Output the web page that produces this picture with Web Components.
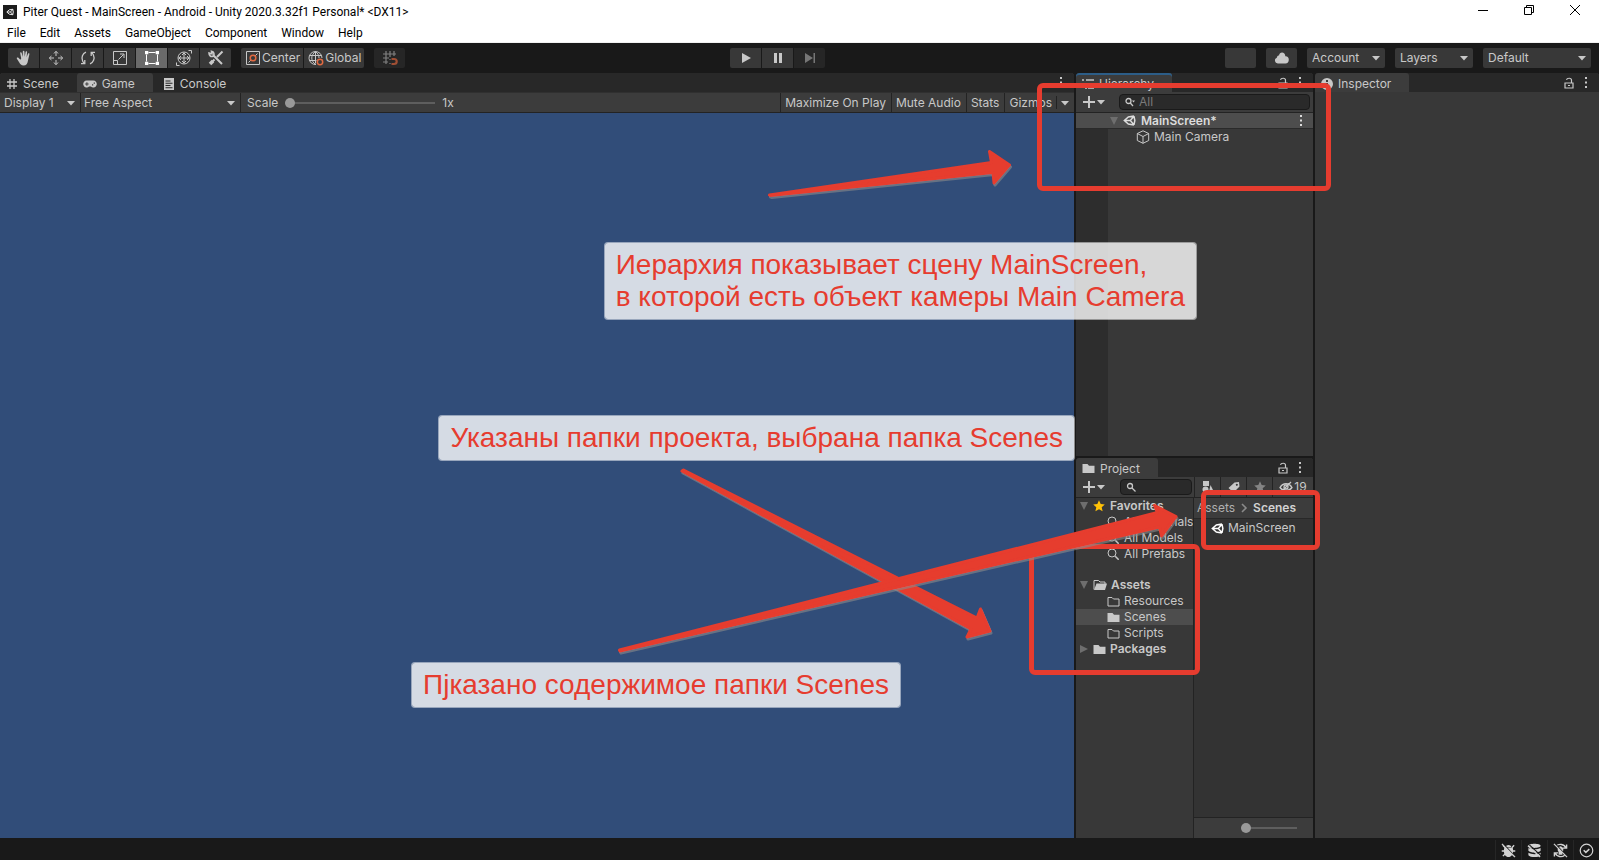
<!DOCTYPE html>
<html lang="en">
<head>
<meta charset="utf-8">
<title>Piter Quest - MainScreen - Android - Unity 2020.3.32f1 Personal* &lt;DX11&gt;</title>
<style>
  html, body { margin: 0; height: 100%; }
  body { overflow: hidden; background: #191919; font: 12px/16px Inter, "Liberation Sans", sans-serif; color: #c8c8c8; }
</style>
</head>
<body>
<unity-editor></unity-editor>
<script>
const BASE = `
  :host, *, *::before, *::after { box-sizing: border-box; }
  button, input, select { font: inherit; color: inherit; margin: 0; padding: 0; border: 0; background: none; outline: 0; }
  button { display: flex; align-items: center; white-space: nowrap; }
`;

function define(tag, html, setup) {
  const template = document.createElement('template');
  template.innerHTML = html;
  customElements.define(tag, class extends HTMLElement {
    constructor() {
      super();
      this.attachShadow({ mode: 'open' }).append(template.content.cloneNode(true));
    }
    connectedCallback() { if (setup) setup.call(this, this.shadowRoot); }
  });
}

const ICONS = {
  unity: [16, '<path fill="none" stroke="currentColor" stroke-width="1.800" d="M13.500 2.500 6.600 3.600 1.600 8l5 4.400 6.900 1.100M13.500 2.500l1.100 5.500-1.100 5.500M9 8H2.500M9 8l4.500-5.200M9 8l4.500 5.200"/>'],
  hand: [16, '<path fill="currentColor" d="M5.200 8.600 4.200 3.200c-.2-1 1.200-1.300 1.500-.3l1.100 4V1.500c0-1.100 1.500-1.100 1.600 0L8.700 6.700 9.600 2c.2-1 1.600-.8 1.500.3l-.5 5 1.400-3.500c.4-.9 1.700-.5 1.400.5L12 10.500c-.4 3-1.600 5-4.500 5-2.200 0-3.300-1.200-4.200-2.900L.9 8.700c-.5-1 .7-1.700 1.500-.9l2 2z"/>'],
  move: [16, '<path fill="none" stroke="currentColor" d="M8 2v4M8 10v4M2 8h4M10 8h4M6 3.500 8 1.200l2 2.300M6 12.500l2 2.300 2-2.300M3.500 6 1.200 8l2.300 2M12.500 6l2.300 2-2.300 2"/>'],
  rotate: [16, '<path fill="none" stroke="currentColor" stroke-width="1.300" d="M6 2.200C2.600 3.400 1 7.500 2.600 11c.4.900 1 1.700 1.700 2.400M10 13.800c3.400-1.200 5-5.300 3.400-8.800-.4-.9-1-1.700-1.700-2.400M1 13.700h3.800V10M15 2.300h-3.800V6"/>'],
  scale: [16, '<path fill="none" stroke="currentColor" d="M1.500 1.500h13v13h-13zM1.500 10.500h4v4M6.500 9.500l5-5M8 4h4v4"/>'],
  rect: [16, '<path fill="none" stroke="currentColor" d="M4.500 2.500h7M4.500 13.500h7M2.500 4.500v7M13.500 4.500v7"/><path fill="currentColor" d="M1 1h3.300v3.300H1zM11.700 1H15v3.300h-3.300zM1 11.700h3.300V15H1zM11.700 11.700H15V15h-3.300z"/>'],
  transform: [16, '<g fill="none" stroke="currentColor"><circle cx="8" cy="8" r="6"/><path d="M8 2.500v11M2.500 8h11M6 5l2-2 2 2M6 11l2 2 2-2M5 6 3 8l2 2M11 6l2 2-2 2M12.500.5h3v3M3.500 15.500h-3v-3"/></g>'],
  tools: [16, '<path fill="none" stroke="currentColor" stroke-width="2" d="m5 5 9 9M14.500 1.500 9 7M6.500 9.500 3 13"/><path fill="none" stroke="currentColor" stroke-width="1.600" d="M1 3c0 3 2 4 4.200 3.200C6.800 4.500 6 1.500 3.500 1.200L4 3.700z"/><path stroke="currentColor" stroke-width="3.500" d="m2 14 3-3"/>'],
  center: [16, '<path fill="none" stroke="currentColor" d="M1.500 1.500h13v13h-13zM3.500 12.500 6 10M10 6l2.500-2.500"/><circle cx="8" cy="8" r="2.800" fill="none" stroke="#e06a42" stroke-width="1.500"/>'],
  global: [16, '<g fill="none" stroke="currentColor"><path d="M14 8A6.500 6.500 0 1 0 8 14.500M7.500 1.500c-5 4-5 9 0 13M7.500 1.500c2.500 2 3.500 4 3.500 6.500M1.500 5.500h12M1.500 10.500h7M7.500 1.500v12"/></g><circle cx="12" cy="12" r="2.700" fill="none" stroke="#e06a42" stroke-width="1.500"/>'],
  snap: [16, '<path fill="none" stroke="#808080" stroke-width="1.200" d="M4 1v13M8 1v6M12 1v5M1 4h13M1 8h6M1 12h5M8 9v1M8 13v1"/><path fill="none" stroke="#a04f34" stroke-width="2.200" d="M9.500 9H12c3.600 0 3.600 5 0 5H9.500"/>'],
  play: [16, '<path fill="currentColor" d="m4 3 9 5-9 5z"/>'],
  pause: [16, '<path fill="currentColor" d="M4 3h3v10H4zM9 3h3v10H9z"/>'],
  step: [16, '<path fill="#767676" d="m3 3 8 5-8 5zM11.500 3H13v10h-1.500z"/>'],
  cloud: [16, '<path fill="currentColor" d="M4 13.500a3 3 0 0 1-1.200-5.800C3 6 4 5.500 5 5.500c.4-4.500 6.500-4 6.300.8 2.200-.2 3.500 1.300 3.500 3.500 0 2.300-1.300 3.700-3.300 3.700z"/>'],
  caret: [8, '<path fill="currentColor" d="M0 2h8L4 6.500z"/>'],
  fold: [10, '<path fill="#6e6e6e" d="M1 1h8L5 9z"/>'],
  unfold: [10, '<path fill="#6e6e6e" d="M1 1v8l8-4z"/>'],
  grid: [12, '<path fill="none" stroke="currentColor" stroke-width="1.300" d="M4 1v10M8 1v10M1 4h10M1 8h10"/>'],
  pad: [14, '<path fill="currentColor" fill-rule="evenodd" d="M3.800 3.500h6.400a3.500 3.500 0 1 1-2.300 6.100H6.100A3.500 3.500 0 1 1 3.800 3.500zM3.400 5.300v1.200H2.200v1h1.200v1.200h1V7.500h1.200v-1H4.400V5.300zM9 7.300v1.200h1.200V7.300zM10.700 5.600v1.200h1.200V5.600z"/>'],
  console: [12, '<path fill="currentColor" fill-rule="evenodd" d="M1 0h10v12H1zM2.500 2.500v1h5v-1zM2.500 4.700v1h7v-1zM2.500 7v1h5V7zM2.500 9.200v1h7v-1z"/>'],
  list: [12, '<path fill="none" stroke="currentColor" stroke-width="1.300" d="M0 2h2M4 2h8M3 6h2M6 6h6M3 10h2M6 10h6"/>'],
  info: [12, '<path fill="currentColor" fill-rule="evenodd" d="M6 0a6 6 0 1 1 0 12A6 6 0 0 1 6 0zM5 2v2h2V2zM4.500 5v1H5v3h-.5v1h3V9H7V5z"/>'],
  lock: [12, '<path fill="none" stroke="currentColor" stroke-width="1.200" d="M2 6h8v5H2zM3.500 2.800C4 .8 8.500.5 8.500 3.200V6M5 8.500h2"/>'],
  dots: [12, '<path fill="currentColor" d="M5 0h2v2H5zM5 4.500h2v2H5zM5 9h2v2H5z"/>'],
  plus: [12, '<path fill="currentColor" d="M5 0h2v5h5v2H7v5H5V7H0V5h5z"/>'],
  find: [10, '<g fill="none" stroke="currentColor" stroke-width="1.300"><circle cx="4" cy="4" r="2.500"/><path d="m6 6 3.500 3.500"/></g>'],
  findmore: [10, '<g fill="none" stroke="currentColor" stroke-width="1.300"><circle cx="3.500" cy="4" r="2.500"/><path d="M5.300 6 8 9"/></g><path fill="currentColor" d="M7 3.500h3L8.500 5.500z"/>'],
  search: [12, '<g fill="none" stroke="currentColor"><circle cx="5" cy="5" r="4"/><path stroke-width="1.500" d="m8.200 8.200 3.500 3.500"/></g>'],
  cube: [14, '<path fill="none" stroke="currentColor" d="m7 .8 5.700 2.700v7L7 13.300 1.300 10.500v-7zM1.300 3.500 7 6.500l5.700-3M7 6.500v6.800"/>'],
  folder: [13, '<path fill="currentColor" d="M.5 2h5L7 3.700h5.500V11H.5z"/>'],
  folderline: [13, '<path fill="none" stroke="currentColor" d="M1 2.500h4L6.500 4H12v7H1z"/>'],
  folderopen: [14, '<path fill="none" stroke="currentColor" d="M1 11.500v-9h4.500L7 4h5v2"/><path fill="currentColor" d="M3.500 5.500H14l-2 6.500H1z"/>'],
  star: [12, '<path fill="currentColor" d="m6 .3 1.700 3.800 4.100.4-3.100 2.700.9 4.100L6 9.200l-3.600 2.100.9-4.100L.2 4.500l4.100-.4z"/>'],
  shapes: [12, '<path fill="currentColor" d="M1 0h6v5H1zM8.500 4l3.500 7H7zM3.500 5.500a3 3 0 1 1 0 6 3 3 0 0 1 0-6z"/>'],
  tag: [12, '<path fill="currentColor" fill-rule="evenodd" d="M6.500 1.500 11 1l.5 4.500-6 6L.5 7zM8.800 2.700a1 1 0 1 0 .1 0z"/>'],
  hidden: [14, '<g fill="none" stroke="currentColor" stroke-width="1.300"><path d="M1 7.500c3-5 9-5 12 0-3 4-9 4-12 0zM2 12 12 2"/><circle cx="7" cy="7" r="2"/></g>'],
  chevron: [10, '<path fill="none" stroke="#8a8a8a" stroke-width="1.600" d="m3 1 4 4-4 4"/>'],
  bug: [16, '<path fill="currentColor" d="M5 4.500C5.200 1.500 10.800 1.500 11 4.500zM3.500 5h9l.5 3c0 4-2 7-5 7s-5-3-5-7z"/><path fill="none" stroke="currentColor" stroke-width="1.500" d="M2 2.500 4.500 5M14 2.500 11.500 5M.8 8.500h3M12.200 8.500h3M2 14l2.500-2.500M14 14l-2.500-2.500"/><path stroke="#191919" stroke-width="1.300" d="m2.500 1 13 14"/><path stroke="currentColor" stroke-width="1.300" d="m1 1 14 14"/>'],
  cache: [16, '<path fill="currentColor" d="M1.500 3c0-3 13-3 13 0S1.500 6 1.500 3zM1.500 5.200c3 2 10 2 13 0v3c-2 2.500-11 2.500-13 0zM1.500 10.500c3 2 10 2 13 0V13c-2 2.700-11 2.700-13 0z"/><path stroke="#191919" stroke-width="1.300" d="m2.500 2 13 12"/><path stroke="currentColor" stroke-width="1.300" d="m1 3 13 12"/>'],
  refresh: [16, '<g fill="none" stroke="currentColor" stroke-width="1.500"><path d="M3.500 3C6.500.5 12 1 13.800 5.500M14.500 1.500v4h-4M12.500 13C9.500 15.500 4 15 2.200 10.500M1.500 14.500v-4h4"/></g><path fill="currentColor" d="M8 3.500a3.500 3.500 0 0 1 2 6V12.500H6V9.500A3.500 3.500 0 0 1 8 3.500z"/><path stroke="#191919" stroke-width="1.300" d="m2.500 1 13 14"/><path stroke="currentColor" stroke-width="1.300" d="m1 1 14 14"/>'],
  check: [16, '<g fill="none" stroke="currentColor" stroke-width="1.300"><circle cx="8" cy="8" r="6.700"/><path stroke-width="1.600" d="m5 7.700 2.300 2.300L11 6.500"/></g>'],
  minimize: [12, '<path stroke="#000" d="M1 6.500h10"/>'],
  restore: [12, '<path fill="none" stroke="#000" d="M1.500 3.500h7v7h-7zM3.500 3.500v-2h7v7h-2"/>'],
  close: [12, '<path fill="none" stroke="#000" d="m1 1 10 10M11 1 1 11"/>'],
};

/* <u-icon name size>: one glyph of the set above */
customElements.define('u-icon', class extends HTMLElement {
  connectedCallback() {
    const [box, body] = ICONS[this.getAttribute('name')];
    const size = this.getAttribute('size') || box;
    const root = this.shadowRoot || this.attachShadow({ mode: 'open' });
    root.innerHTML = `<style>:host{display:block;flex:none}svg{display:block}</style>
      <svg width="${size}" height="${size}" viewBox="0 0 ${box} ${box}" aria-hidden="true">${body}</svg>`;
  }
});

/* Drop-down: a native select with the editor's caret laid in its last column */
customElements.define('u-select', class extends HTMLElement {
  connectedCallback() {
    const value = this.getAttribute('value');
    const root = this.shadowRoot || this.attachShadow({ mode: 'open' });
    root.innerHTML = `<style>${BASE}
      :host { display: grid; grid-template-columns: 1fr 13px; align-items: center; height: 20px; }
      select { appearance: none; grid-area: 1 / 1 / 2 / 3; width: 100%; height: 100%; padding-left: var(--pad, 4px); }
      u-icon { grid-area: 1 / 2; pointer-events: none; }
    </style><select aria-label="${value}"><option>${value}</option></select><u-icon name="caret"></u-icon>`;
  }
});

customElements.define('u-slider', class extends HTMLElement {
  connectedCallback() {
    const root = this.shadowRoot || this.attachShadow({ mode: 'open' });
    root.innerHTML = `<style>${BASE}
      :host { display: flex; align-items: center; }
      input { appearance: none; width: 100%; height: 10px; background: linear-gradient(#5e5e5e, #5e5e5e) center / 100% 2px no-repeat; }
      input::-webkit-slider-thumb { appearance: none; width: 10px; height: 10px; border-radius: 50%; background: #999; }
    </style><input type="range" min="0" max="100" value="0" aria-label="${this.getAttribute('label')}">`;
  }
});

/* Search field: the magnifier is passed in through the slot */
define('u-search', `<style>${BASE}
  :host { display: block; min-width: 0; }
  label { display: flex; align-items: center; gap: 4px; height: 16px; padding: 0 5px; border: 1px solid #1a1a1a; border-radius: 4px; background: #2a2a2a; }
  input { flex: 1; min-width: 0; width: 0; }
  input::placeholder { color: #7a7a7a; opacity: 1; }
</style><label><slot></slot><input type="text" aria-label="Search"></label>`, function (root) {
  root.querySelector('input').placeholder = this.getAttribute('hint') || '';
});

/* Dock panel: tab strip, optional tools at its right end, then the panel body */
define('u-panel', `<style>${BASE}
  :host { display: flex; flex-direction: column; min-width: 0; min-height: 0; background: #383838; border-radius: 3px 3px 0 0; overflow: hidden; }
  .strip { display: flex; height: 19px; background: #282828; flex: none; }
  .end { margin-left: auto; display: flex; align-items: flex-start; gap: 5px; padding: 4px 7px 0 0; }
</style><div class="strip" role="tablist"><slot name="tab"></slot><div class="end"><slot name="end"></slot></div></div><slot></slot>`);

define('u-tab', `<style>${BASE}
  :host { display: block; }
  button { height: 19px; gap: 5px; padding: 2px 18px 0 6px; border-radius: 3px 3px 0 0; }
  :host([wide]) button { padding-left: 10px; }
  :host([active]) button { background: #3c3c3c; }
  :host([focused]) button { box-shadow: inset 0 2px #2c5d87; }
</style><button role="tab"><slot name="icon"></slot><span><slot></slot></span></button>`);

define('title-bar', `<style>${BASE}
  :host { display: block; background: #fff; color: #000; font-family: Roboto, sans-serif; border-bottom: 1px solid #f0f0f0; }
  .title { display: flex; align-items: center; height: 24px; padding-left: 3px; }
  .logo { display: grid; place-items: center; width: 14px; height: 14px; margin-right: 6px; background: #1c1c1c; color: #fff; }
  .window { display: flex; gap: 34px; margin-left: auto; padding: 0 18px 4px 0; }
  nav { display: flex; height: 18px; }
  nav button { padding: 0 7px; }
</style>
<div class="title"><div class="logo"><u-icon name="unity" size="8"></u-icon></div>Piter Quest - MainScreen - Android - Unity 2020.3.32f1 Personal* &lt;DX11&gt;
  <div class="window"><button aria-label="Minimize"><u-icon name="minimize"></u-icon></button><button aria-label="Restore"><u-icon name="restore"></u-icon></button><button aria-label="Close"><u-icon name="close"></u-icon></button></div></div>
<nav><button>File</button><button>Edit</button><button>Assets</button><button>GameObject</button><button>Component</button><button>Window</button><button>Help</button></nav>`);

define('main-toolbar', `<style>${BASE}
  :host { display: grid; grid-template-columns: 1fr auto 1fr; align-items: center; height: 30px; padding: 0 8px; background: #191919; }
  .group { display: flex; gap: 1px; }
  .left, .right { display: flex; align-items: center; gap: 10px; }
  .right { justify-content: flex-end; }
  .play { margin-right: 44px; }
  button { height: 20px; min-width: 31px; justify-content: center; background: #383838; }
  .group button:first-child { border-radius: 2px 0 0 2px; }
  .group button:last-child { border-radius: 0 2px 2px 0; }
  .mode button { gap: 1px; padding: 0 3px 0 4px; }
  button.on { background: #6a6a6a; color: #fff; }
  button.dim { background: #262626; }
  button.single { border-radius: 2px; }
  u-select { width: 78px; background: #383838; border-radius: 2px; --pad: 5px; }
  u-select.layout { width: 108px; }
</style>
<div class="left">
  <div class="group"><button aria-label="Hand"><u-icon name="hand"></u-icon></button><button aria-label="Move"><u-icon name="move"></u-icon></button><button aria-label="Rotate"><u-icon name="rotate"></u-icon></button><button aria-label="Scale"><u-icon name="scale"></u-icon></button><button class="on" aria-label="Rect"><u-icon name="rect"></u-icon></button><button aria-label="Transform"><u-icon name="transform"></u-icon></button><button aria-label="Custom tools"><u-icon name="tools"></u-icon></button></div>
  <div class="group mode"><button><u-icon name="center"></u-icon>Center</button><button><u-icon name="global"></u-icon>Global</button></div>
  <button class="dim single" aria-label="Snap"><u-icon name="snap"></u-icon></button>
</div>
<div class="group play"><button aria-label="Play"><u-icon name="play"></u-icon></button><button aria-label="Pause"><u-icon name="pause"></u-icon></button><button class="dim" aria-label="Step"><u-icon name="step"></u-icon></button></div>
<div class="right"><button class="single" aria-label="Collaborate"></button><button class="single" aria-label="Cloud"><u-icon name="cloud"></u-icon></button><u-select value="Account"></u-select><u-select value="Layers"></u-select><u-select class="layout" value="Default"></u-select></div>`);

define('game-view', `<style>${BASE}
  :host { display: grid; min-width: 0; }
  .bar { display: flex; height: 21px; flex: none; background: #3c3c3c; border-top: 1px solid #303030; border-bottom: 1px solid #232323; }
  .bar > * { height: 19px; border-right: 1px solid #232323; }
  .display { width: 81px; }
  .aspect { width: 160px; --pad: 3px; }
  .scale { display: flex; align-items: center; gap: 7px; padding-left: 6px; border: 0; flex: 1; min-width: 0; }
  .scale u-slider { width: 150px; }
  .toggle { padding: 0 5px 0 4px; }
  .toggle:nth-of-type(1) { border-left: 1px solid #232323; }
  .gizmos { border: 0; padding-right: 4px; }
  .more { padding: 0 5px 0 4px; height: 13px; margin-top: 3px; border: 0; border-left: 1px solid #232323; }
  .view { flex: 1; background: #314d79; }
</style>
<u-panel>
  <u-tab slot="tab"><u-icon slot="icon" name="grid"></u-icon>Scene</u-tab>
  <u-tab slot="tab" active><u-icon slot="icon" name="pad"></u-icon>Game</u-tab>
  <u-tab slot="tab" wide><u-icon slot="icon" name="console"></u-icon>Console</u-tab>
  <u-icon slot="end" name="dots"></u-icon>
  <div class="bar"><u-select class="display" value="Display 1"></u-select><u-select class="aspect" value="Free Aspect"></u-select>
    <div class="scale"><span>Scale</span><u-slider label="Scale"></u-slider><span>1x</span></div>
    <button class="toggle">Maximize On Play</button><button class="toggle">Mute Audio</button><button class="toggle">Stats</button><button class="toggle gizmos">Gizmos</button><button class="more" aria-label="Gizmos menu"><u-icon name="caret"></u-icon></button></div>
  <div class="view"></div>
</u-panel>`);

define('hierarchy-panel', `<style>${BASE}
  :host { display: grid; min-height: 0; }
  .bar { display: flex; align-items: center; height: 21px; flex: none; padding: 0 3px 0 7px; background: #3c3c3c; border-bottom: 1px solid #232323; }
  .add { gap: 2px; }
  u-search { flex: 1; margin-left: 14px; }
  .tree { flex: 1; background: linear-gradient(90deg, #2d2d2d 32px, #383838 32px); }
  .row { display: flex; align-items: center; height: 16px; }
  .scene { padding: 0 6px 0 33px; background: #4d4d4d; font-weight: 600; border-bottom: 1px solid #2a2a2a; color: #dcdcdc; }
  .scene span { margin: 0 auto 0 5px; }
  .scene u-icon + u-icon { margin-left: 4px; }
  .object { padding-left: 60px; gap: 4px; }
</style>
<u-panel>
  <u-tab slot="tab" active focused><u-icon slot="icon" name="list"></u-icon>Hierarchy</u-tab>
  <u-icon slot="end" name="lock"></u-icon><u-icon slot="end" name="dots"></u-icon>
  <div class="bar"><button class="add" aria-label="Create"><u-icon name="plus"></u-icon><u-icon name="caret"></u-icon></button><u-search hint="All"><u-icon name="findmore"></u-icon></u-search></div>
  <div class="tree">
    <div class="row scene"><u-icon name="fold"></u-icon><u-icon name="unity" size="13"></u-icon><span>MainScreen*</span><u-icon name="dots"></u-icon></div>
    <div class="row object"><u-icon name="cube"></u-icon>Main Camera</div>
  </div>
</u-panel>`);

define('project-panel', `<style>${BASE}
  :host { display: grid; min-height: 0; }
  .bar { display: flex; align-items: center; height: 21px; flex: none; padding-left: 7px; background: #3c3c3c; border-bottom: 1px solid #232323; }
  .add { gap: 2px; }
  u-search { width: 72px; margin: 0 2px 0 auto; }
  .filter { justify-content: center; width: 26px; height: 20px; border-left: 1px solid #232323; }
  .count { width: 41px; gap: 1px; }
  .split { flex: 1; display: grid; grid-template-columns: 118px 1fr; min-height: 0; }
  .tree { border-right: 1px solid #232323; overflow: hidden; }
  .row { display: flex; align-items: center; gap: 4px; height: 16px; padding-left: 3px; white-space: nowrap; }
  .child { padding-left: 31px; }
  .find { gap: 5px; }
  .root { font-weight: 600; }
  .favorite { color: #ffc107; margin-right: 1px; }
  .group { margin-top: 15px; }
  .selected { background: #4d4d4d; }
  .content { display: flex; flex-direction: column; background: #333; }
  .crumbs { display: flex; align-items: center; gap: 4px; height: 21px; padding-left: 3px; background: #3c3c3c; border-bottom: 1px solid #282828; }
  .crumbs b { font-weight: 600; color: #d2d2d2; }
  .crumbs a { color: #b0b0b0; text-decoration: none; }
  .file { display: flex; align-items: center; gap: 4px; height: 18px; padding-left: 17px; }
  .file u-icon { color: #fff; }
  .size { display: flex; justify-content: flex-end; margin-top: auto; height: 21px; padding-right: 16px; background: #3c3c3c; border-top: 1px solid #232323; }
  .size u-slider { width: 56px; }
</style>
<u-panel>
  <u-tab slot="tab" active><u-icon slot="icon" name="folder"></u-icon>Project</u-tab>
  <u-icon slot="end" name="lock"></u-icon><u-icon slot="end" name="dots"></u-icon>
  <div class="bar"><button class="add" aria-label="Create"><u-icon name="plus"></u-icon><u-icon name="caret"></u-icon></button><u-search><u-icon name="find"></u-icon></u-search>
    <button class="filter" aria-label="By type"><u-icon name="shapes"></u-icon></button><button class="filter" aria-label="By label"><u-icon name="tag"></u-icon></button><button class="filter" aria-label="Save search"><u-icon name="star" style="color:#848484"></u-icon></button><button class="filter count"><u-icon name="hidden"></u-icon>19</button></div>
  <div class="split">
    <div class="tree">
      <div class="row root"><u-icon name="fold"></u-icon><u-icon class="favorite" name="star"></u-icon>Favorites</div>
      <div class="row child find"><u-icon name="search"></u-icon>All Materials</div>
      <div class="row child find"><u-icon name="search"></u-icon>All Models</div>
      <div class="row child find"><u-icon name="search"></u-icon>All Prefabs</div>
      <div class="row root group"><u-icon name="fold"></u-icon><u-icon name="folderopen"></u-icon>Assets</div>
      <div class="row child"><u-icon name="folderline"></u-icon>Resources</div>
      <div class="row child selected"><u-icon name="folder"></u-icon>Scenes</div>
      <div class="row child"><u-icon name="folderline"></u-icon>Scripts</div>
      <div class="row root"><u-icon name="unfold"></u-icon><u-icon name="folder"></u-icon>Packages</div>
    </div>
    <div class="content">
      <div class="crumbs"><a href="#assets">Assets</a><u-icon name="chevron"></u-icon><b>Scenes</b></div>
      <div class="file"><u-icon name="unity" size="13"></u-icon>MainScreen</div>
      <div class="size"><u-slider label="Icon size"></u-slider></div>
    </div>
  </div>
</u-panel>`);

define('inspector-panel', `<style>:host { display: grid; }</style>
<u-panel>
  <u-tab slot="tab" active><u-icon slot="icon" name="info"></u-icon>Inspector</u-tab>
  <u-icon slot="end" name="lock"></u-icon><u-icon slot="end" name="dots"></u-icon>
</u-panel>`);

define('status-bar', `<style>${BASE}
  :host { display: flex; justify-content: flex-end; height: 22px; padding-top: 2px; background: #191919; color: #d2d2d2; }
  button { justify-content: center; width: 26px; border-left: 1px solid #262626; }
</style>
<button aria-label="Debugger"><u-icon name="bug" size="15"></u-icon></button><button aria-label="Cache server"><u-icon name="cache" size="15"></u-icon></button><button aria-label="Auto refresh"><u-icon name="refresh" size="15"></u-icon></button><button aria-label="Background tasks"><u-icon name="check" size="15"></u-icon></button>`);

define('note-callout', `<style>
  :host { position: absolute; padding: 6px 11px; border: 1px solid rgba(255,255,255,.5); border-radius: 4px; background: rgba(255,255,255,.8); background-clip: padding-box; color: #e63c2f; font: 28px/32px "Liberation Sans", Arial, sans-serif; white-space: nowrap; }
</style><slot></slot>`);

define('note-frame', `<style>
  :host { position: absolute; box-sizing: border-box; border: 5px solid #e63c2f; border-radius: 6px; }
</style>`);

/* Presenter's notes, drawn over the editor and tied to its right-hand panels */
define('note-layer', `<style>
  :host { position: absolute; inset: 0; overflow: hidden; pointer-events: none; }
  svg { position: absolute; top: 0; right: 0; }
  .hierarchy { top: 83px; right: 268px; width: 294px; height: 108px; }
  .folders { top: 544px; right: 399px; width: 171px; height: 131px; }
  .files { top: 490px; right: 279px; width: 119px; height: 60px; }
  .one { top: 242px; right: 402px; }
  .two { top: 415px; right: 524px; }
  .three { top: 662px; right: 698px; }
</style>
<note-frame class="hierarchy"></note-frame><note-frame class="folders"></note-frame><note-frame class="files"></note-frame>
<svg width="1599" height="860" viewBox="0 0 1599 860" aria-hidden="true">
  <defs><filter id="soft" x="-5%" y="-5%" width="110%" height="115%"><feDropShadow dx="1" dy="2" stdDeviation=".6" flood-color="#8a8a8a" flood-opacity=".6"/></filter></defs>
  <g fill="#e63c2f" stroke="#e63c2f" stroke-width="3" stroke-linejoin="round">
    <path filter="url(#soft)" d="m769.500 195 222-32.500-2-11 20 13.500-15.500 18-1-10.500-222.500 23z"/>
    <path filter="url(#soft)" d="M683.500 470 977 618l3.500-9 9.500 22-23 6 4-8L682 471z"/>
    <path filter="url(#soft)" d="M619.500 650 1157.500 512.500l-3-7 21.500 11-14.500 19.500-2-9L620 651z"/>
  </g>
</svg>
<note-callout class="one">Иерархия показывает сцену MainScreen,<br>в которой есть объект камеры Main Camera</note-callout>
<note-callout class="two">Указаны папки проекта, выбрана папка Scenes</note-callout>
<note-callout class="three">Пjказано содержимое папки Scenes</note-callout>`);

define('unity-editor', `<style>
  :host { display: flex; flex-direction: column; height: 100vh; position: relative; }
  main { flex: 1; min-height: 0; display: grid; grid-template-columns: 1fr 237px 284px; gap: 2px; background: #191919; }
  .column { display: grid; grid-template-rows: 383fr 380fr; gap: 2px; min-height: 0; }
</style>
<title-bar></title-bar>
<main-toolbar></main-toolbar>
<main><game-view></game-view><div class="column"><hierarchy-panel></hierarchy-panel><project-panel></project-panel></div><inspector-panel></inspector-panel></main>
<status-bar></status-bar>
<note-layer></note-layer>`);
</script>
</body>
</html>
